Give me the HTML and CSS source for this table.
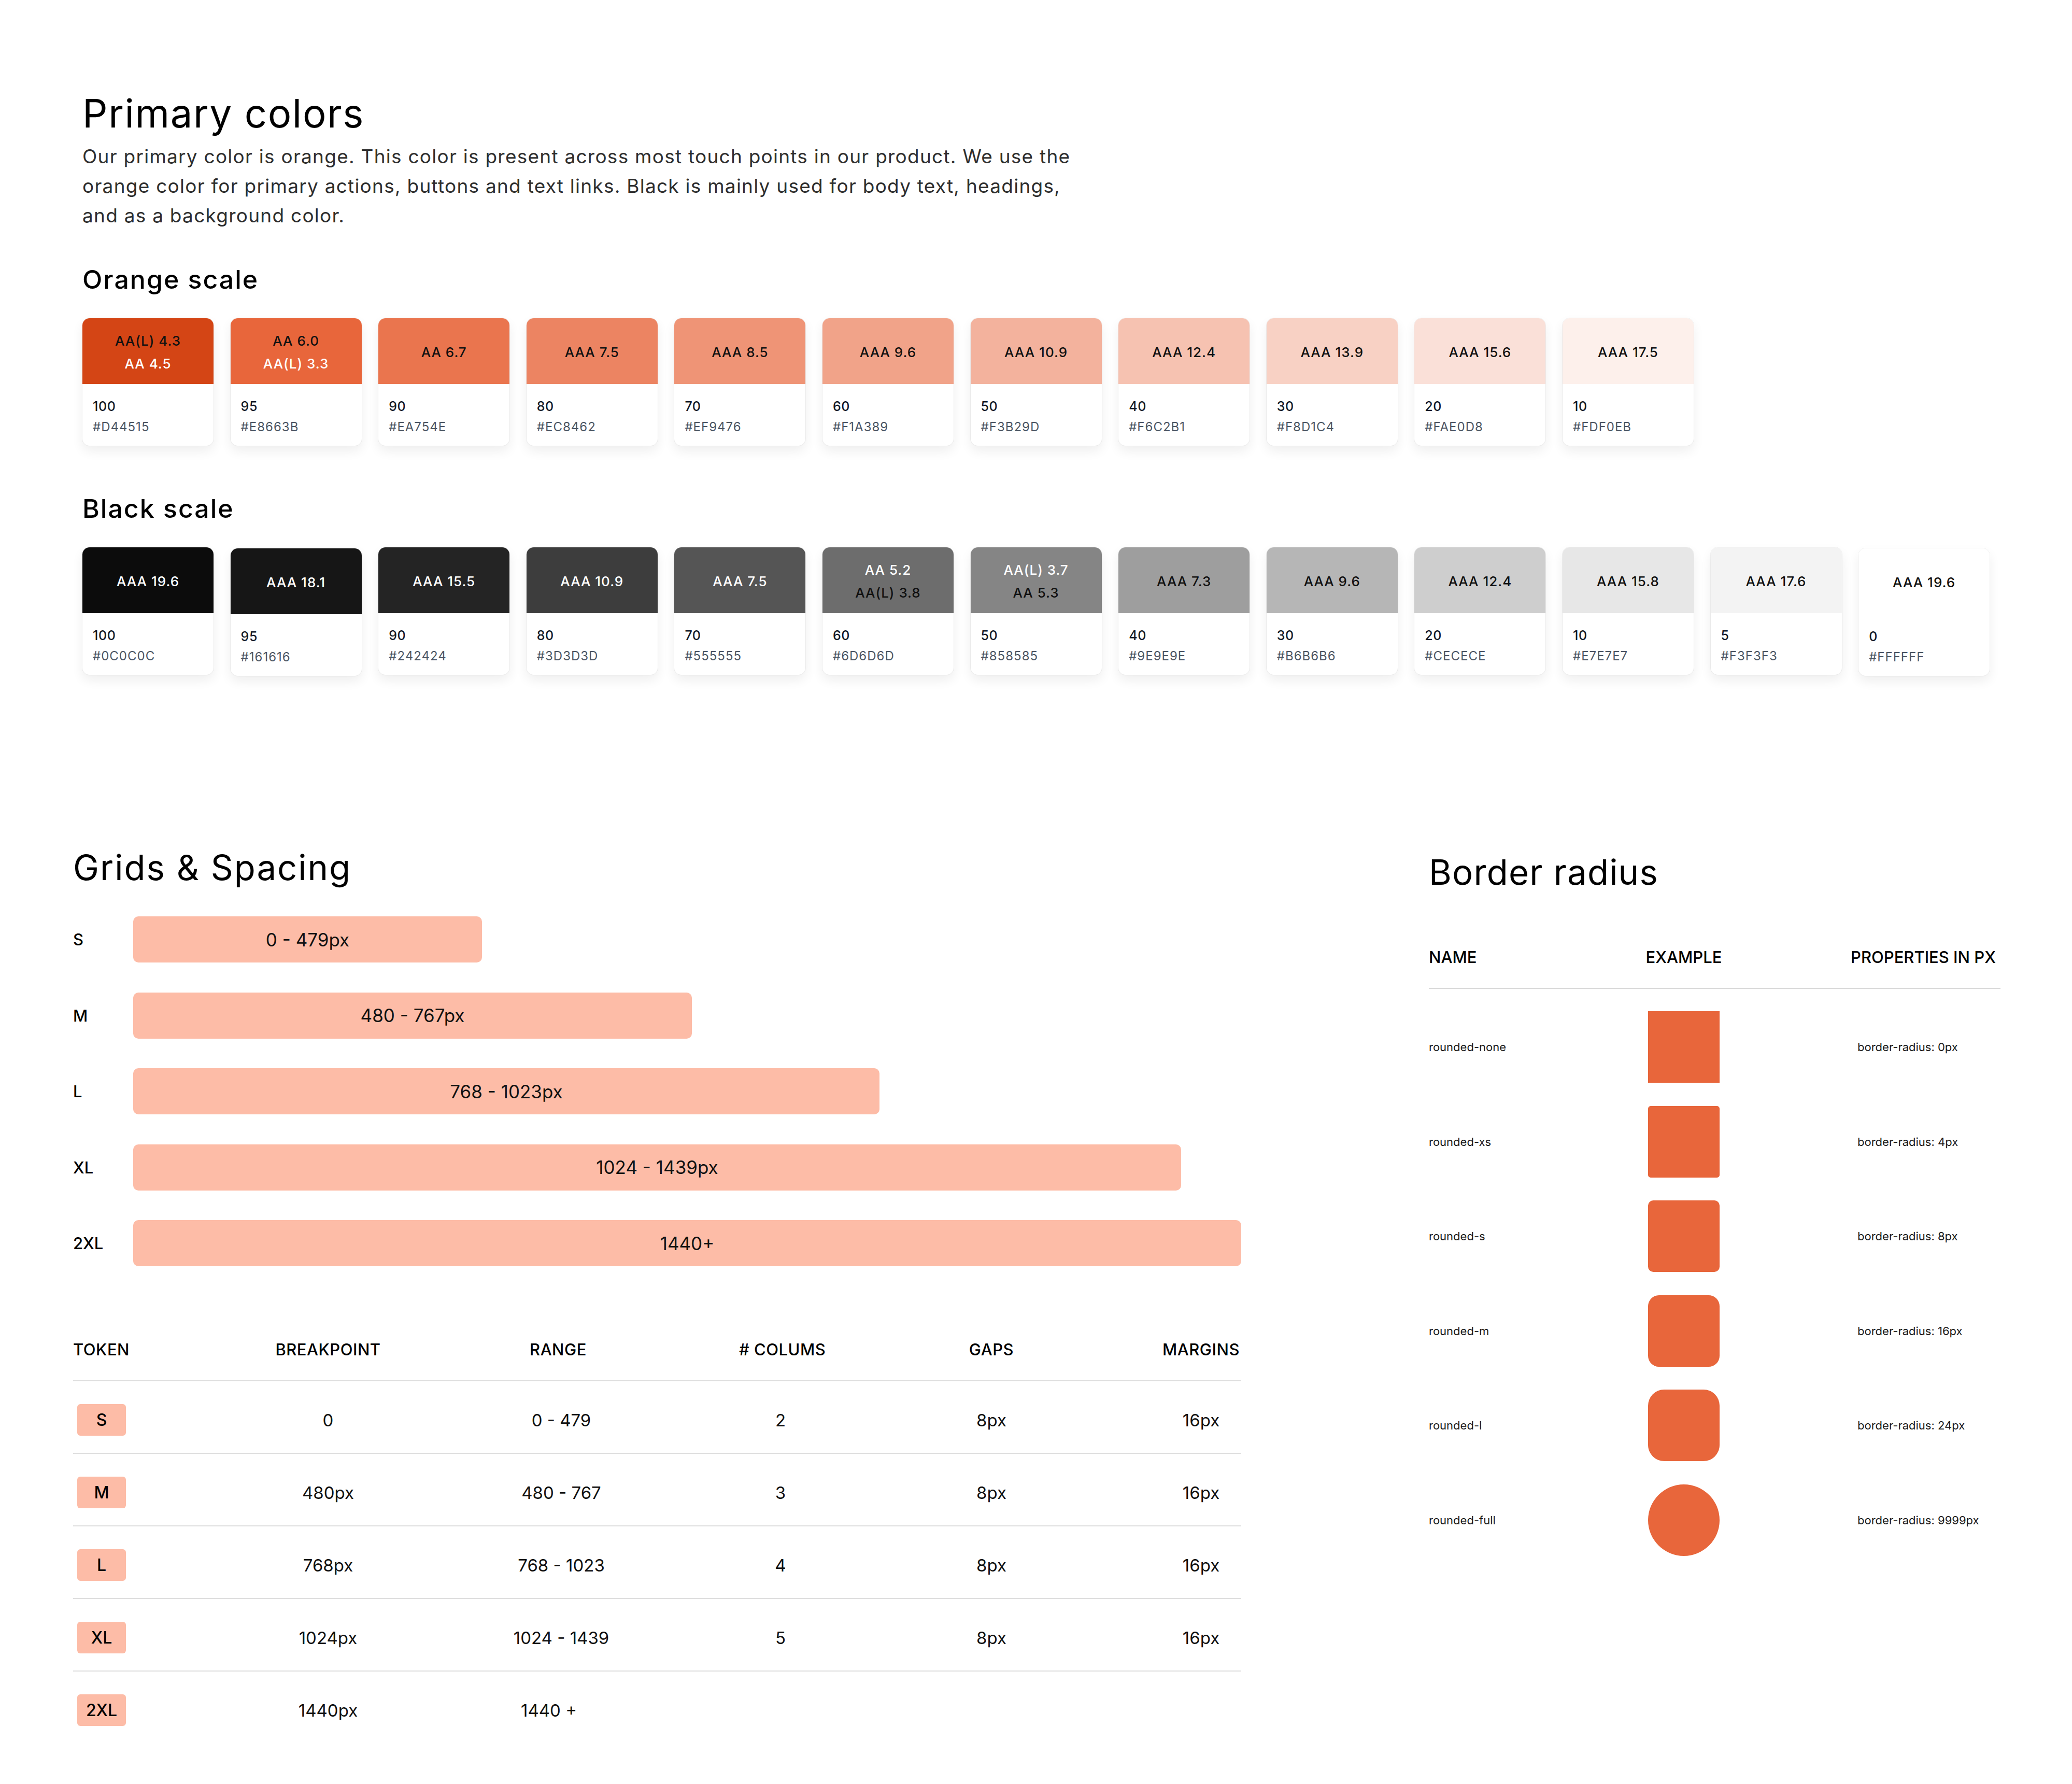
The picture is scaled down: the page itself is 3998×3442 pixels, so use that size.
FILE: index.html
```html
<!DOCTYPE html>
<html lang="en">
<head>
<meta charset="utf-8">
<title>Primary colors</title>
<link rel="stylesheet" href="styles.css">
</head>
<body>
<main class="page">
  <section class="colors">
    <h1 class="title">Primary colors</h1>
    <p class="intro">Our primary color is orange. This color is present across most touch points in our product. We use the<br>orange color for primary actions, buttons and text links. Black is mainly used for body text, headings,<br>and as a background color.</p>

    <h2 class="scale-title scale-title--first">Orange scale</h2>
    <div class="swatches">
      <div class="card"><div class="card__color" style="background:#D44515"><span class="ink-dark">AA(L) 4.3</span><span class="ink-light">AA 4.5</span></div><div class="card__body"><span class="card__step">100</span><span class="card__hex">#D44515</span></div></div>
      <div class="card"><div class="card__color" style="background:#E8663B"><span class="ink-dark">AA 6.0</span><span class="ink-light">AA(L) 3.3</span></div><div class="card__body"><span class="card__step">95</span><span class="card__hex">#E8663B</span></div></div>
      <div class="card"><div class="card__color" style="background:#EA754E"><span class="ink-dark">AA 6.7</span></div><div class="card__body"><span class="card__step">90</span><span class="card__hex">#EA754E</span></div></div>
      <div class="card"><div class="card__color" style="background:#EC8462"><span class="ink-dark">AAA 7.5</span></div><div class="card__body"><span class="card__step">80</span><span class="card__hex">#EC8462</span></div></div>
      <div class="card"><div class="card__color" style="background:#EF9476"><span class="ink-dark">AAA 8.5</span></div><div class="card__body"><span class="card__step">70</span><span class="card__hex">#EF9476</span></div></div>
      <div class="card"><div class="card__color" style="background:#F1A389"><span class="ink-dark">AAA 9.6</span></div><div class="card__body"><span class="card__step">60</span><span class="card__hex">#F1A389</span></div></div>
      <div class="card"><div class="card__color" style="background:#F3B29D"><span class="ink-dark">AAA 10.9</span></div><div class="card__body"><span class="card__step">50</span><span class="card__hex">#F3B29D</span></div></div>
      <div class="card"><div class="card__color" style="background:#F6C2B1"><span class="ink-dark">AAA 12.4</span></div><div class="card__body"><span class="card__step">40</span><span class="card__hex">#F6C2B1</span></div></div>
      <div class="card"><div class="card__color" style="background:#F8D1C4"><span class="ink-dark">AAA 13.9</span></div><div class="card__body"><span class="card__step">30</span><span class="card__hex">#F8D1C4</span></div></div>
      <div class="card"><div class="card__color" style="background:#FAE0D8"><span class="ink-dark">AAA 15.6</span></div><div class="card__body"><span class="card__step">20</span><span class="card__hex">#FAE0D8</span></div></div>
      <div class="card"><div class="card__color" style="background:#FDF0EB"><span class="ink-dark">AAA 17.5</span></div><div class="card__body"><span class="card__step">10</span><span class="card__hex">#FDF0EB</span></div></div>
    </div>

    <h2 class="scale-title scale-title--second">Black scale</h2>
    <div class="swatches">
      <div class="card"><div class="card__color" style="background:#0C0C0C"><span class="ink-light">AAA 19.6</span></div><div class="card__body"><span class="card__step">100</span><span class="card__hex">#0C0C0C</span></div></div>
      <div class="card card--nudge"><div class="card__color" style="background:#161616"><span class="ink-light">AAA 18.1</span></div><div class="card__body"><span class="card__step">95</span><span class="card__hex">#161616</span></div></div>
      <div class="card"><div class="card__color" style="background:#242424"><span class="ink-light">AAA 15.5</span></div><div class="card__body"><span class="card__step">90</span><span class="card__hex">#242424</span></div></div>
      <div class="card"><div class="card__color" style="background:#3D3D3D"><span class="ink-light">AAA 10.9</span></div><div class="card__body"><span class="card__step">80</span><span class="card__hex">#3D3D3D</span></div></div>
      <div class="card"><div class="card__color" style="background:#555555"><span class="ink-light">AAA 7.5</span></div><div class="card__body"><span class="card__step">70</span><span class="card__hex">#555555</span></div></div>
      <div class="card"><div class="card__color" style="background:#6D6D6D"><span class="ink-light">AA 5.2</span><span class="ink-dark">AA(L) 3.8</span></div><div class="card__body"><span class="card__step">60</span><span class="card__hex">#6D6D6D</span></div></div>
      <div class="card"><div class="card__color" style="background:#858585"><span class="ink-light">AA(L) 3.7</span><span class="ink-dark">AA 5.3</span></div><div class="card__body"><span class="card__step">50</span><span class="card__hex">#858585</span></div></div>
      <div class="card"><div class="card__color" style="background:#9E9E9E"><span class="ink-dark">AAA 7.3</span></div><div class="card__body"><span class="card__step">40</span><span class="card__hex">#9E9E9E</span></div></div>
      <div class="card"><div class="card__color" style="background:#B6B6B6"><span class="ink-dark">AAA 9.6</span></div><div class="card__body"><span class="card__step">30</span><span class="card__hex">#B6B6B6</span></div></div>
      <div class="card"><div class="card__color" style="background:#CECECE"><span class="ink-dark">AAA 12.4</span></div><div class="card__body"><span class="card__step">20</span><span class="card__hex">#CECECE</span></div></div>
      <div class="card"><div class="card__color" style="background:#E7E7E7"><span class="ink-dark">AAA 15.8</span></div><div class="card__body"><span class="card__step">10</span><span class="card__hex">#E7E7E7</span></div></div>
      <div class="card"><div class="card__color" style="background:#F3F3F3"><span class="ink-dark">AAA 17.6</span></div><div class="card__body"><span class="card__step">5</span><span class="card__hex">#F3F3F3</span></div></div>
      <div class="card card--nudge"><div class="card__color" style="background:#FFFFFF"><span class="ink-dark">AAA 19.6</span></div><div class="card__body"><span class="card__step">0</span><span class="card__hex">#FFFFFF</span></div></div>
    </div>
  </section>

  <div class="lower">
    <section class="grids">
      <h2 class="section-title">Grids &amp; Spacing</h2>
      <div class="bars">
        <div class="bar-row"><span class="bar-label">S</span><div class="bar" style="width:673px">0 - 479px</div></div>
        <div class="bar-row"><span class="bar-label">M</span><div class="bar" style="width:1078px">480 - 767px</div></div>
        <div class="bar-row"><span class="bar-label">L</span><div class="bar" style="width:1440px">768 - 1023px</div></div>
        <div class="bar-row"><span class="bar-label">XL</span><div class="bar" style="width:2022px">1024 - 1439px</div></div>
        <div class="bar-row"><span class="bar-label">2XL</span><div class="bar" style="width:2138px">1440+</div></div>
      </div>

      <div class="bp-table">
        <div class="bp-row bp-row--head">
          <span class="bp-cell bp-cell--token">TOKEN</span>
          <span class="bp-cell">BREAKPOINT</span>
          <span class="bp-cell bp-cell--range-head">RANGE</span>
          <span class="bp-cell"># COLUMS</span>
          <span class="bp-cell">GAPS</span>
          <span class="bp-cell">MARGINS</span>
        </div>
        <div class="bp-row">
          <span class="bp-cell bp-cell--token"><span class="token">S</span></span>
          <span class="bp-cell">0</span>
          <span class="bp-cell">0 - 479</span>
          <span class="bp-cell">2</span>
          <span class="bp-cell">8px</span>
          <span class="bp-cell">16px</span>
        </div>
        <div class="bp-row">
          <span class="bp-cell bp-cell--token"><span class="token">M</span></span>
          <span class="bp-cell">480px</span>
          <span class="bp-cell">480 - 767</span>
          <span class="bp-cell">3</span>
          <span class="bp-cell">8px</span>
          <span class="bp-cell">16px</span>
        </div>
        <div class="bp-row">
          <span class="bp-cell bp-cell--token"><span class="token">L</span></span>
          <span class="bp-cell">768px</span>
          <span class="bp-cell">768 - 1023</span>
          <span class="bp-cell">4</span>
          <span class="bp-cell">8px</span>
          <span class="bp-cell">16px</span>
        </div>
        <div class="bp-row">
          <span class="bp-cell bp-cell--token"><span class="token">XL</span></span>
          <span class="bp-cell">1024px</span>
          <span class="bp-cell">1024 - 1439</span>
          <span class="bp-cell">5</span>
          <span class="bp-cell">8px</span>
          <span class="bp-cell">16px</span>
        </div>
        <div class="bp-row">
          <span class="bp-cell bp-cell--token"><span class="token">2XL</span></span>
          <span class="bp-cell">1440px</span>
          <span class="bp-cell bp-cell--left">1440 +</span>
          <span class="bp-cell"></span>
          <span class="bp-cell"></span>
          <span class="bp-cell"></span>
        </div>
      </div>
    </section>

    <section class="radius">
      <h2 class="section-title section-title--radius">Border radius</h2>
      <div class="radius-head">
        <span class="radius-head__name">NAME</span>
        <span class="radius-head__example">EXAMPLE</span>
        <span class="radius-head__props">PROPERTIES IN PX</span>
      </div>
      <div class="radius-list">
        <span class="radius-name">rounded-none</span><span class="radius-swatch radius-swatch--none"></span><span class="radius-prop">border-radius: 0px</span>
        <span class="radius-name">rounded-xs</span><span class="radius-swatch radius-swatch--xs"></span><span class="radius-prop">border-radius: 4px</span>
        <span class="radius-name">rounded-s</span><span class="radius-swatch radius-swatch--s"></span><span class="radius-prop">border-radius: 8px</span>
        <span class="radius-name">rounded-m</span><span class="radius-swatch radius-swatch--m"></span><span class="radius-prop">border-radius: 16px</span>
        <span class="radius-name">rounded-l</span><span class="radius-swatch radius-swatch--l"></span><span class="radius-prop">border-radius: 24px</span>
        <span class="radius-name">rounded-full</span><span class="radius-swatch radius-swatch--full"></span><span class="radius-prop">border-radius: 9999px</span>
      </div>
    </section>
  </div>
</main>
</body>
</html>
```

FILE: styles.css
```css
* { box-sizing: border-box; }

html, body {
  margin: 0;
  padding: 0;
  background: #ffffff;
}

body {
  font-family: Inter, "Noto Sans", "DejaVu Sans", sans-serif;
  color: #000000;
}

.page {
  width: 3998px;
  padding-bottom: 100px;
}

/* ---------- Primary colors ---------- */
.colors {
  padding-left: 159px;
}

.title {
  margin: 173px 0 0;
  font-size: 76px;
  line-height: 90px;
  font-weight: 400;
  letter-spacing: 1.6px;
}

.intro {
  margin: 10px 0 0;
  font-size: 37px;
  line-height: 57px;
  font-weight: 400;
  letter-spacing: 1.25px;
  color: #2e2e2e;
  white-space: nowrap;
}

.scale-title {
  margin: 0;
  font-size: 50px;
  line-height: 56px;
  font-weight: 500;
  letter-spacing: 2px;
}

.scale-title--first { margin-top: 67px; }
.scale-title--second { margin-top: 93px; }

.swatches {
  display: flex;
  gap: 32.6px;
  margin-top: 47px;
  align-items: flex-start;
}

.card {
  width: 253px;
  height: 246px;
  border-radius: 14px;
  background: #ffffff;
  overflow: hidden;
  box-shadow: 0 0 0 1px rgba(0, 0, 0, 0.05), 0 10px 22px rgba(0, 0, 0, 0.07);
  display: flex;
  flex-direction: column;
}

.card--nudge { margin-top: 2px; }

.card__color {
  height: 127px;
  flex: none;
  display: flex;
  flex-direction: column;
  align-items: center;
  justify-content: center;
  padding-top: 4px;
  font-size: 26px;
  line-height: 44px;
  font-weight: 500;
  letter-spacing: 1px;
}

.ink-dark { color: #111111; }
.ink-light { color: #ffffff; }

.card__body {
  display: flex;
  flex-direction: column;
  padding: 23px 20px 0;
  line-height: 40px;
}

.card__step {
  font-size: 25px;
  font-weight: 500;
  letter-spacing: 0.6px;
  color: #111827;
}

.card__hex {
  font-size: 24px;
  font-weight: 400;
  letter-spacing: 1px;
  color: #4b5563;
}

/* ---------- Lower area ---------- */
.lower {
  display: flex;
  align-items: flex-start;
  gap: 362px;
  margin-top: 330px;
  padding-left: 141px;
}

.section-title {
  margin: 0;
  font-size: 67px;
  line-height: 80px;
  font-weight: 400;
  letter-spacing: 2px;
}

.section-title--radius {
  margin-top: 9px;
  letter-spacing: 1.2px;
}

.grids {
  width: 2254px;
  flex: none;
}

.bars {
  display: flex;
  flex-direction: column;
  gap: 57.5px;
  margin-top: 54px;
}

.bar-row {
  display: flex;
  align-items: center;
}

.bar-label {
  width: 116px;
  flex: none;
  font-size: 31px;
  font-weight: 500;
}

.bar {
  height: 89px;
  border-radius: 10px;
  background: #fdbca7;
  display: flex;
  align-items: center;
  justify-content: center;
  font-size: 35px;
  color: #111111;
}

.bp-table {
  margin-top: 141px;
}

.bp-row {
  display: grid;
  grid-template-columns: 385px 214px 686px 160px 654px 155px;
  align-items: center;
  padding: 44px 0 33px;
  border-bottom: 2px solid #dedede;
  font-size: 33px;
  color: #111111;
}

.bp-row:last-child { border-bottom: none; }

.bp-row--head {
  padding: 0 0 39px;
  font-size: 31px;
  line-height: 40px;
  font-weight: 500;
  letter-spacing: 0.5px;
  color: #000000;
}

.bp-cell {
  text-align: center;
  white-space: nowrap;
}

.bp-cell--token {
  text-align: left;
}

.bp-cell--range-head {
  padding-right: 12px;
}

.bp-cell--left {
  text-align: left;
  padding-left: 265px;
}

.token {
  display: inline-flex;
  align-items: center;
  justify-content: center;
  width: 94px;
  height: 61px;
  margin-left: 8px;
  border-radius: 6px;
  background: #fdbca7;
  font-size: 32px;
  font-weight: 500;
  color: #000000;
}

/* ---------- Border radius ---------- */
.radius {
  width: 1103px;
  flex: none;
}

.radius-head {
  display: grid;
  grid-template-columns: 423px 138px 1fr;
  margin-top: 104px;
  padding-bottom: 40px;
  border-bottom: 1px solid #cccccc;
  font-size: 31px;
  line-height: 40px;
  font-weight: 500;
  white-space: nowrap;
}

.radius-head__example {
  justify-self: center;
}

.radius-head__props {
  padding-left: 253px;
}

.radius-list {
  display: grid;
  grid-template-columns: 423px 138px 1fr;
  row-gap: 44.5px;
  align-items: center;
  padding-top: 43px;
  font-size: 22px;
  color: #1a1a1a;
}

.radius-prop {
  padding-left: 266px;
  white-space: nowrap;
}

.radius-swatch {
  width: 138px;
  height: 138px;
  background: #e8663b;
}

.radius-swatch--none { border-radius: 0; }
.radius-swatch--xs { border-radius: 5px; }
.radius-swatch--s { border-radius: 10px; }
.radius-swatch--m { border-radius: 21px; }
.radius-swatch--l { border-radius: 31px; }
.radius-swatch--full { border-radius: 9999px; }
```
